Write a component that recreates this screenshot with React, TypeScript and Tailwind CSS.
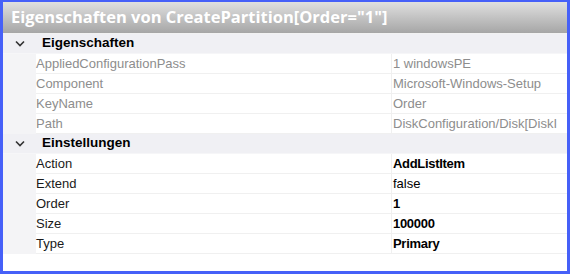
import React from "react";

type Row = { name: string; value: string; bold?: boolean; muted?: boolean };

const groups: { title: string; rows: Row[] }[] = [
  {
    title: "Eigenschaften",
    rows: [
      { name: "AppliedConfigurationPass", value: "1 windowsPE", muted: true },
      { name: "Component", value: "Microsoft-Windows-Setup", muted: true },
      { name: "KeyName", value: "Order", muted: true },
      { name: "Path", value: "DiskConfiguration/Disk[DiskI", muted: true },
    ],
  },
  {
    title: "Einstellungen",
    rows: [
      { name: "Action", value: "AddListItem", bold: true },
      { name: "Extend", value: "false" },
      { name: "Order", value: "1", bold: true },
      { name: "Size", value: "100000", bold: true },
      { name: "Type", value: "Primary", bold: true },
    ],
  },
];

function Chevron() {
  return (
    <svg width="10" height="7" viewBox="0 0 10 7" className="text-[#333]">
      <path d="M1 1.5 L5 5.5 L9 1.5" fill="none" stroke="currentColor" strokeWidth="1.6" />
    </svg>
  );
}

export default function App() {
  return (
    <div className="w-[570px] h-[274px] bg-[#4660f8] pt-[2px] pb-[3px] pl-[3px] pr-[3px]">
      <div className="h-full bg-white flex flex-col overflow-hidden">
        {/* title bar */}
        <div className="h-[31px] shrink-0 flex items-center pl-[8px] bg-gradient-to-b from-[#e0e0e0] to-[#a6a6a6]">
          <span className="text-white font-bold text-[16.5px] whitespace-nowrap [font-family:'Open_Sans',sans-serif]">
            Eigenschaften von CreatePartition[Order="1"]
          </span>
        </div>
        <div className="h-px bg-[#f2f2f2]" />
        <div className="flex-1 flex flex-col text-[13px] [font-family:'Liberation_Sans',Arial,sans-serif]">
          {groups.map((g) => (
            <div key={g.title}>
              <div className="h-[20px] flex items-center bg-[#f0f0f4] border-b border-[#f6f6f8]">
                <div className="w-[33px] flex justify-center pl-[1px]">
                  <Chevron />
                </div>
                <span className="pl-[6px] font-bold text-black text-[13.5px]">{g.title}</span>
              </div>
              {g.rows.map((r) => (
                <div key={r.name} className="h-[20px] flex">
                  <div className="w-[33px] shrink-0 bg-[#f4f4f6]" />
                  <div
                    className={
                      "w-[356px] shrink-0 flex items-center border-b border-r border-[#f0f0f0] whitespace-nowrap " +
                      (r.muted ? "text-[#8d8d8d]" : "text-[#1a1a1a]")
                    }
                  >
                    {r.name}
                  </div>
                  <div
                    className={
                      "flex-1 pl-[1px] flex items-center border-b border-[#f0f0f0] whitespace-nowrap overflow-hidden " +
                      (r.muted ? "text-[#8d8d8d] " : "text-black ") +
                      (r.bold ? "font-bold tracking-[-0.3px]" : "")
                    }
                  >
                    {r.value}
                  </div>
                </div>
              ))}
            </div>
          ))}
          <div className="flex-1" />
        </div>
      </div>
    </div>
  );
}
